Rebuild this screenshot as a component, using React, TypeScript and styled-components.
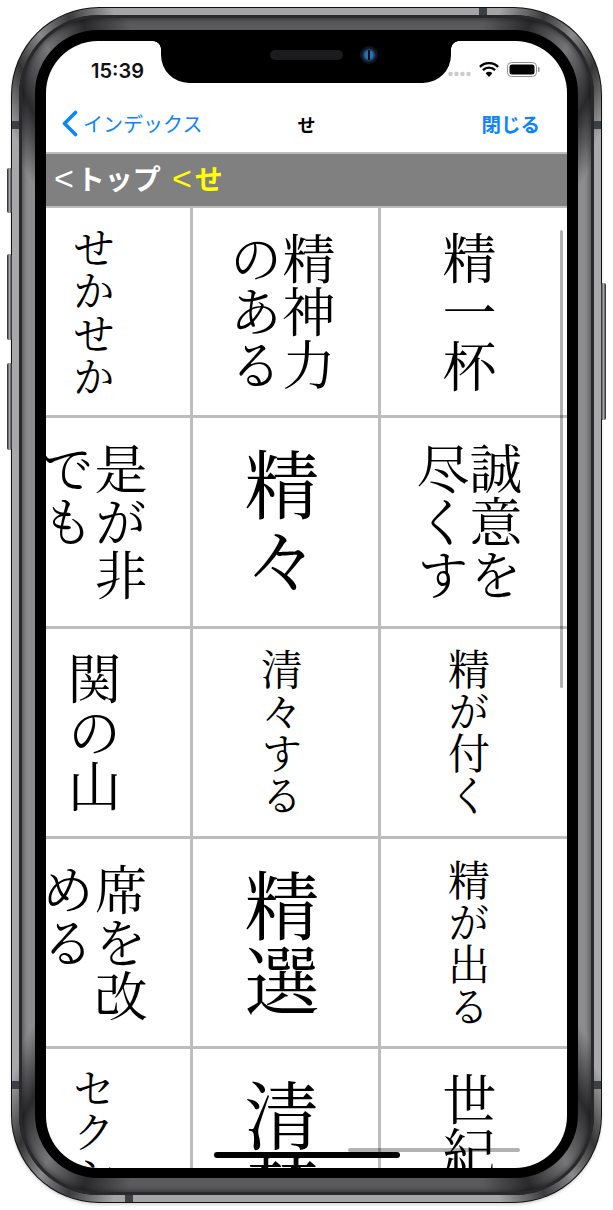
import React from "react";
import styled, { createGlobalStyle } from "styled-components";

const GlobalStyle = createGlobalStyle`
  html, body {
    margin: 0;
    padding: 0;
    background: #fff;
  }
`;

const MINCHO = `"Noto Serif CJK JP", "Noto Sans CJK JP", serif`;
const UI = `"Inter", "Liberation Sans", "Noto Sans CJK JP", sans-serif`;
const JP = `"Noto Sans CJK JP", "Liberation Sans", sans-serif`;

// rim is lighter on the straight edges, dark with a highlight round the corners
const STEEL = `conic-gradient(#a5a5a7 0 18deg, #3a3a3c 22deg, #8a8a8c 25deg, #333 28deg, #a8a8aa 32deg 148deg, #333 152deg, #8a8a8c 155deg, #3a3a3c 158deg, #a5a5a7 162deg 198deg, #3a3a3c 202deg, #8a8a8c 205deg, #333 208deg, #a8a8aa 212deg 328deg, #333 332deg, #8a8a8c 335deg, #3a3a3c 338deg, #a5a5a7 342deg)`;
const INNER = `conic-gradient(#5a5a5c 0 17deg, #2a2a2c 21deg, #77777a 25deg, #2a2a2c 29deg, #8c8c8e 33deg 147deg, #2a2a2c 151deg, #77777a 155deg, #2a2a2c 159deg, #5a5a5c 163deg 197deg, #2a2a2c 201deg, #77777a 205deg, #2a2a2c 209deg, #8c8c8e 213deg 327deg, #2a2a2c 331deg, #77777a 335deg, #2a2a2c 339deg, #5a5a5c 343deg)`;
const ANTENNA = `linear-gradient(#3c4046, #3c4046)`;

const Page = styled.div`
  width: 613px;
  height: 1210px;
  padding: 7px 11px;
  box-sizing: border-box;
  overflow: hidden;
`;

const PhoneShell = styled.div`
  position: relative;
  width: 591px;
  height: 1196px;
  box-sizing: border-box;
  padding: 1px;
  border-radius: 88px;
  background: #111;
  box-shadow: 0 2px 3px rgba(0, 0, 0, 0.15);
`;

// the antenna lines are painted on the rim, the inner band hides their middle
const SteelBand = styled.div`
  height: 100%;
  box-sizing: border-box;
  padding: 7px;
  border-radius: 87px;
  background:
    ${ANTENNA} 0 113px / 100% 8px no-repeat,
    ${ANTENNA} 0 1073px / 100% 8px no-repeat,
    ${ANTENNA} 467px 0 / 8px 8px no-repeat,
    ${ANTENNA} 113px 100% / 8px 8px no-repeat,
    ${STEEL};
`;

const InnerBand = styled.div`
  height: 100%;
  box-sizing: border-box;
  padding: 15px 16px 17px;
  border-radius: 80px;
  background: ${INNER};
  box-shadow: inset 0 0 0 3px #29292b, inset 0 0 4px 5px rgba(0, 0, 0, 0.35);
`;

const Bezel = styled.div`
  height: 100%;
  box-sizing: border-box;
  padding: 11px 11px 10px;
  border-radius: 63px;
  background: #000;
`;

const Screen = styled.div`
  position: relative;
  height: 100%;
  display: flex;
  flex-direction: column;
  overflow: hidden;
  border-radius: 52px;
  background: #fff;
`;

const ButtonRail = styled.div<{ $side: "left" | "right"; $top: number }>`
  position: absolute;
  top: ${(p) => p.$top}px;
  ${(p) => p.$side}: -4px;
  width: 5px;
  display: flex;
  flex-direction: column;
`;

const SideButton = styled.div<{ $height: number; $gap?: number }>`
  height: ${(p) => p.$height}px;
  margin-bottom: ${(p) => p.$gap ?? 0}px;
  border-radius: 2px;
  background: linear-gradient(90deg, #1e1e20, #a8a8aa 50%, #1e1e20);
`;

const Notch = styled.div`
  position: absolute;
  top: 0;
  left: 115px;
  width: 290px;
  height: 42px;
  box-sizing: border-box;
  padding: 5px 0 0 109px;
  display: flex;
  align-items: flex-start;
  gap: 17px;
  border-radius: 0 0 28px 28px;
  background: #000;
  &::before,
  &::after {
    content: "";
    position: absolute;
    top: 0;
    width: 8px;
    height: 8px;
  }
  &::before {
    left: -8px;
    background: radial-gradient(circle at 0 100%, transparent 7.5px, #000 8px);
  }
  &::after {
    right: -8px;
    background: radial-gradient(circle at 100% 100%, transparent 7.5px, #000 8px);
  }
`;

const Speaker = styled.div`
  width: 73px;
  height: 10px;
  margin-top: 4px;
  border-radius: 5px;
  background: #1b1b1d;
`;

const Camera = styled.div`
  position: relative;
  width: 18px;
  height: 18px;
  border-radius: 50%;
  background: radial-gradient(circle, #2f6fb5 0, #2f6fb5 28%, #10161f 55%, #0d1118 100%);
  &::after {
    content: "";
    position: absolute;
    top: 4px;
    left: 8px;
    width: 2px;
    height: 10px;
    background: #0d1118;
  }
`;

const StatusBar = styled.div`
  flex: none;
  height: 56px;
  box-sizing: border-box;
  padding: 18px 27px 0 45px;
  display: flex;
  justify-content: space-between;
  align-items: flex-start;
`;

const Clock = styled.span`
  font-family: ${UI};
  font-size: 20px;
  line-height: 24px;
  font-weight: 600;
  color: #111;
`;

const StatusIcons = styled.div`
  display: flex;
  align-items: flex-start;
  gap: 8px;
  height: 15px;
  margin-top: 3px;
`;

const NavBar = styled.div`
  flex: none;
  height: 55px;
  box-sizing: border-box;
  padding: 0 27px 2px 15px;
  display: flex;
  align-items: center;
  justify-content: space-between;
  position: relative;
`;

const BackLink = styled.span`
  display: flex;
  align-items: center;
  gap: 5px;
  font-family: ${JP};
  font-size: 20px;
  color: #0a84ff;
`;

const NavTitle = styled.span`
  position: absolute;
  left: 0;
  right: 0;
  text-align: center;
  font-family: ${JP};
  font-size: 18px;
  font-weight: 700;
  color: #000;
`;

const CloseLink = styled.span`
  font-family: ${JP};
  font-size: 19.5px;
  font-weight: 700;
  color: #0a84ff;
`;

const Crumbs = styled.div`
  flex: none;
  height: 56px;
  box-sizing: border-box;
  padding: 0 0 4px 8px;
  display: flex;
  align-items: center;
  gap: 11px;
  background: #808080;
  border-top: 2px solid #bdbdbd;
  border-bottom: 2px solid #bdbdbd;
  font-family: ${JP};
  font-size: 28px;
  line-height: 1;
  font-weight: 700;
`;

const Crumb = styled.span<{ $current?: boolean }>`
  display: flex;
  align-items: center;
  gap: 3px;
  color: ${(p) => (p.$current ? "#ffff00" : "#ffffff")};
`;

const CrumbMark = styled.span`
  font-family: "Liberation Sans", sans-serif;
  font-size: 34px;
  font-weight: 400;
  line-height: 1;
`;

// first column runs past the screen's left edge, so long entries get clipped there
const Grid = styled.div`
  flex: 1;
  min-height: 0;
  margin-left: -41px;
  display: grid;
  grid-template-columns: 188px 188px 186px;
  grid-auto-rows: 210.33px;
  overflow: hidden;
`;

const Cell = styled.div<{ $size: number }>`
  box-sizing: border-box;
  display: flex;
  align-items: center;
  justify-content: center;
  padding-right: 7px;
  overflow: hidden;
  border-right: 3px solid #bdbdbd;
  border-bottom: 3px solid #bdbdbd;
  &:nth-child(3n) {
    border-right: none;
    padding-right: 10px;
  }
  font-family: ${MINCHO};
  font-size: ${(p) => p.$size}px;
  line-height: 1;
  color: #000;
`;

const VerticalText = styled.span`
  writing-mode: vertical-rl;
  text-orientation: upright;
  white-space: pre;
  flex: none;
`;

const ScrollThumb = styled.div`
  position: absolute;
  top: 189px;
  right: 4px;
  width: 3px;
  height: 458px;
  border-radius: 2px;
  background: rgba(0, 0, 0, 0.3);
`;

const HomeBar = styled.div`
  position: absolute;
  left: 168px;
  bottom: 10px;
  width: 186px;
  height: 6px;
  border-radius: 3px;
  background: #000;
`;

const HomeBarGhost = styled.div`
  position: absolute;
  left: 302px;
  bottom: 16px;
  width: 172px;
  height: 4px;
  border-radius: 2px;
  background: rgba(0, 0, 0, 0.3);
`;

const cells: { text: string; size: number }[] = [
  { text: "せかせか", size: 43 },
  { text: "精神力\nのある", size: 53 },
  { text: "精一杯", size: 54 },
  { text: "是が非\nでも", size: 53 },
  { text: "精々", size: 75 },
  { text: "誠意を\n尽くす", size: 53 },
  { text: "関の山", size: 54 },
  { text: "清々する", size: 42 },
  { text: "精が付く", size: 42 },
  { text: "席を改\nめる", size: 53 },
  { text: "精選", size: 75 },
  { text: "精が出る", size: 42 },
  { text: "セクシー", size: 43 },
  { text: "清楚", size: 75 },
  { text: "世紀末", size: 54 },
];

export default function App() {
  return (
    <Page>
      <GlobalStyle />
      <PhoneShell>
        <ButtonRail $side="left" $top={161}>
          <SideButton $height={45} $gap={41} />
          <SideButton $height={86} $gap={23} />
          <SideButton $height={87} />
        </ButtonRail>
        <ButtonRail $side="right" $top={276}>
          <SideButton $height={137} />
        </ButtonRail>
        <SteelBand>
          <InnerBand>
            <Bezel>
              <Screen>
                <StatusBar>
                  <Clock>15:39</Clock>
                  <StatusIcons>
                    <svg width="23" height="15" viewBox="0 0 23 15">
                      <circle cx="2.5" cy="12" r="2.2" fill="#cbcbcb" />
                      <circle cx="8.5" cy="12" r="2.2" fill="#cbcbcb" />
                      <circle cx="14.5" cy="12" r="2.2" fill="#cbcbcb" />
                      <circle cx="20.5" cy="12" r="2.2" fill="#cbcbcb" />
                    </svg>
                    <svg width="20" height="15" viewBox="0 0 20 15">
                      <path d="M10 15 6.6 11.2a4.8 4.8 0 0 1 6.8 0Z" fill="#000" />
                      <path d="M3.9 8.1a8.6 8.6 0 0 1 12.2 0" fill="none" stroke="#000" strokeWidth="2.3" />
                      <path d="M.9 4.9a12.9 12.9 0 0 1 18.2 0" fill="none" stroke="#000" strokeWidth="2.3" />
                    </svg>
                    <svg width="33" height="15" viewBox="0 0 33 15">
                      <rect x="0.5" y="0.5" width="29" height="14" rx="4" fill="none" stroke="#8e8e8e" />
                      <rect x="2.5" y="2.5" width="25" height="10" rx="2.5" fill="#000" />
                      <rect x="31" y="5" width="1.5" height="5" rx="0.7" fill="#8e8e8e" />
                    </svg>
                  </StatusIcons>
                </StatusBar>
                <NavBar>
                  <BackLink>
                    <svg width="17" height="27" viewBox="0 0 17 27">
                      <path d="M14.5 2.5 3.5 13.5 14.5 24.5" fill="none" stroke="#0a84ff" strokeWidth="3.6" strokeLinecap="round" strokeLinejoin="round" />
                    </svg>
                    インデックス
                  </BackLink>
                  <NavTitle>せ</NavTitle>
                  <CloseLink>閉じる</CloseLink>
                </NavBar>
                <Crumbs>
                  <Crumb>
                    <CrumbMark>&lt;</CrumbMark>トップ
                  </Crumb>
                  <Crumb $current>
                    <CrumbMark>&lt;</CrumbMark>せ
                  </Crumb>
                </Crumbs>
                <Grid>
                  {cells.map((c) => (
                    <Cell key={c.text} $size={c.size}>
                      <VerticalText>{c.text}</VerticalText>
                    </Cell>
                  ))}
                </Grid>
                <Notch>
                  <Speaker />
                  <Camera />
                </Notch>
                <ScrollThumb />
                <HomeBarGhost />
                <HomeBar />
              </Screen>
            </Bezel>
          </InnerBand>
        </SteelBand>
      </PhoneShell>
    </Page>
  );
}
